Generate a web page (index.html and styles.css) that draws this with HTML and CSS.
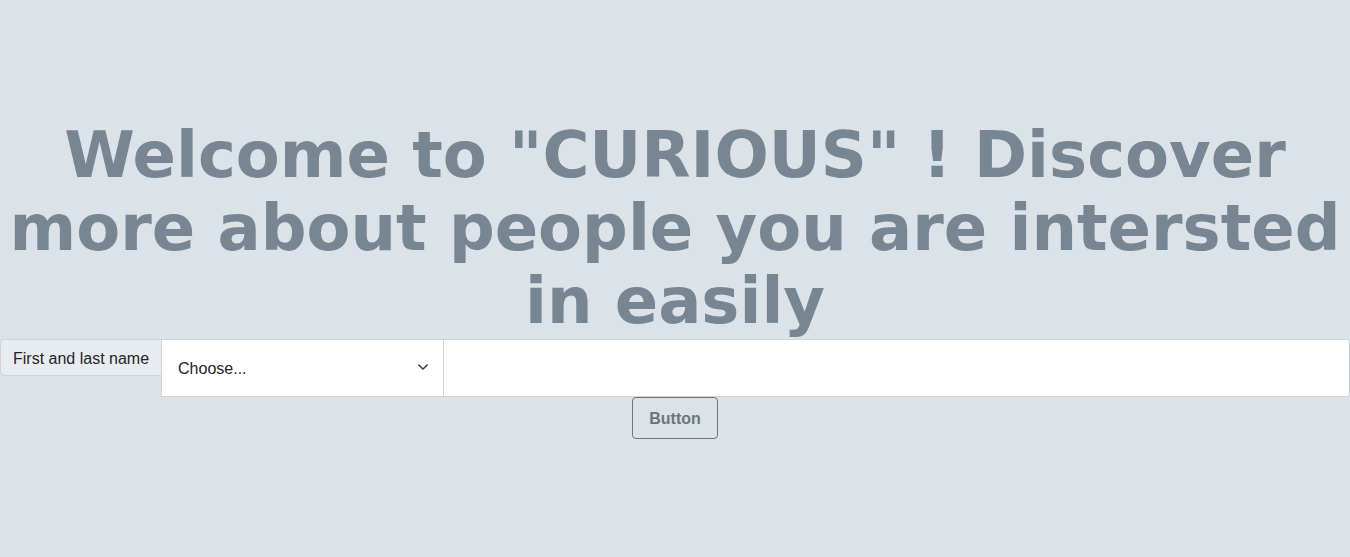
FILE: index.html
```html
<!DOCTYPE html>
<html lang="en">
<head>
<meta charset="utf-8">
<title>Curious</title>
<link rel="stylesheet" href="styles.css">
</head>
<body>
<main class="page">
  <h1 class="title">Welcome to "CURIOUS" ! Discover more about people you are intersted in easily</h1>
  <div class="input-group">
    <span class="group-label">First and last name</span>
    <div class="select-wrap">
      <select class="group-select">
        <option>Choose...</option>
      </select>
      <svg class="chevron" width="12" height="8" viewBox="0 0 12 8" aria-hidden="true">
        <path d="M1.8 2 L6 6 L10.2 2" fill="none" stroke="#343a40" stroke-width="1.5" stroke-linecap="round" stroke-linejoin="round"/>
      </svg>
    </div>
    <input class="group-input" type="text">
  </div>
  <button class="btn" type="button">Button</button>
</main>
</body>
</html>
```
FILE: styles.css
```css
* { box-sizing: border-box; }
html, body { margin: 0; padding: 0; }
body {
  background: #dbe2e8;
  font-family: "Liberation Sans", Arial, sans-serif;
  color: #212529;
}
.page {
  height: 557px;
  display: flex;
  flex-direction: column;
  justify-content: center;
  align-items: center;
}
.title {
  margin: 0;
  font-family: "DejaVu Sans", sans-serif;
  font-weight: bold;
  font-size: 64px;
  line-height: 73px;
  text-align: center;
  color: #788592;
}
.input-group {
  display: flex;
  align-items: flex-start;
  width: 100%;
  margin-top: 1px;
}
.group-label {
  flex: none;
  padding: 7px 12px 5px;
  font-size: 16px;
  line-height: 24px;
  background: #e9ecef;
  border: 1px solid #ced4da;
  border-radius: 4px 0 0 4px;
  color: #212529;
  height: 37px;
}
.select-wrap {
  position: relative;
  flex: none;
  width: 283px;
  margin-left: -1px;
}
.group-select {
  appearance: none;
  -webkit-appearance: none;
  display: block;
  width: 100%;
  height: 58px;
  padding: 2px 40px 0 16px;
  font-family: "Liberation Sans", Arial, sans-serif;
  font-size: 16px;
  color: #212529;
  background: #fff;
  border: 1px solid #ced4da;
  border-radius: 0;
  outline: none;
}
.chevron {
  position: absolute;
  right: 15px;
  top: 24px;
  pointer-events: none;
}
.group-input {
  flex: 1;
  min-width: 0;
  height: 58px;
  margin-left: -1px;
  background: #fff;
  border: 1px solid #ced4da;
  border-radius: 0 4px 4px 0;
  font-size: 16px;
  outline: none;
}
.btn {
  margin-top: 0;
  width: 86px;
  height: 42px;
  padding: 2px 0 0;
  font-family: "Liberation Sans", Arial, sans-serif;
  font-weight: bold;
  font-size: 16px;
  color: #6c757d;
  background: transparent;
  border: 1px solid #6c757d;
  border-radius: 4px;
}
```
